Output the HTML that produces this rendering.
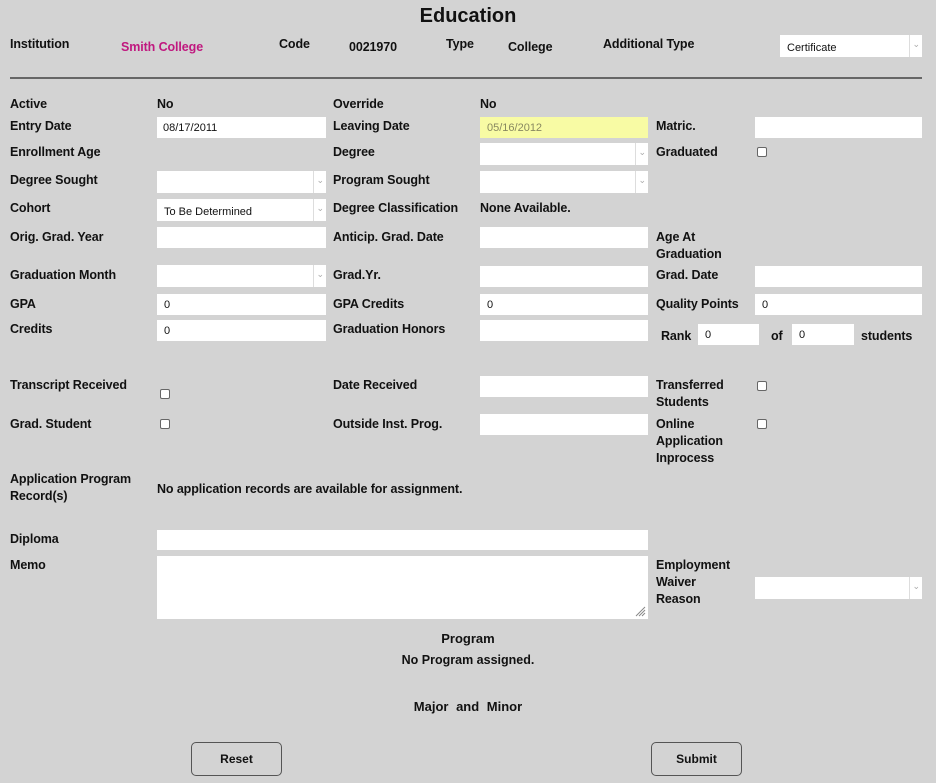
<!DOCTYPE html>
<html><head><meta charset="utf-8"><style>
*{box-sizing:border-box;margin:0;padding:0}
body{width:936px;height:783px;background:#d3d3d3;position:relative;overflow:hidden;font-family:"Liberation Sans",Arial,sans-serif;color:#111}
.l{position:absolute;font-weight:bold;font-size:12.5px;line-height:17px;white-space:nowrap;letter-spacing:-0.1px;margin-top:1px}
.i{position:absolute;background:#fff;height:21px;font-size:11px;line-height:23px;padding-left:7px}
.s{position:absolute;background:#fff;height:22px;font-size:11px;line-height:26px;padding-left:7px}
.s:after{content:"";position:absolute;right:0;top:0;width:12px;height:22px;border-left:1px solid #ddd;background:#fff}
.s:before{content:"⌄";position:absolute;right:2px;top:-4px;font-size:9px;color:#aaa;z-index:2}
.c{position:absolute;width:10px;height:10px;border:1px solid #666;border-radius:2px;background:#fff}
.b{position:absolute;width:91px;height:34px;border:1px solid #555;border-radius:5px;font-weight:bold;font-size:12px;text-align:center;line-height:32px;background:#d3d3d3}
.ctr{position:absolute;left:0;width:936px;text-align:center;font-weight:bold;font-size:13px}
</style></head><body>
<div class="ctr" style="top:5px;font-size:20px">Education</div>
<div class="l" style="left:10px;top:35px">Institution</div>
<div class="l" style="left:121px;top:38px;color:#c0187f">Smith College</div>
<div class="l" style="left:279px;top:35px">Code</div>
<div class="l" style="left:349px;top:38px">0021970</div>
<div class="l" style="left:446px;top:35px">Type</div>
<div class="l" style="left:508px;top:38px">College</div>
<div class="l" style="left:603px;top:35px">Additional Type</div>
<div class="s" style="left:780px;top:35px;width:142px">Certificate</div>
<div style="position:absolute;left:10px;top:77px;width:912px;height:2px;background:#666"></div>

<div class="l" style="left:10px;top:95px">Active</div>
<div class="l" style="left:157px;top:95px">No</div>
<div class="l" style="left:333px;top:95px">Override</div>
<div class="l" style="left:480px;top:95px">No</div>

<div class="l" style="left:10px;top:117px">Entry Date</div>
<div class="i" style="left:157px;top:117px;width:169px;padding-left:6px">08/17/2011</div>
<div class="l" style="left:333px;top:117px">Leaving Date</div>
<div class="i" style="left:480px;top:117px;width:168px;background:#f8fba4;color:#888860">05/16/2012</div>
<div class="l" style="left:656px;top:117px">Matric.</div>
<div class="i" style="left:755px;top:117px;width:167px"></div>

<div class="l" style="left:10px;top:143px">Enrollment Age</div>
<div class="l" style="left:333px;top:143px">Degree</div>
<div class="s" style="left:480px;top:143px;width:168px"></div>
<div class="l" style="left:656px;top:143px">Graduated</div>
<div class="c" style="left:757px;top:147px"></div>

<div class="l" style="left:10px;top:171px">Degree Sought</div>
<div class="s" style="left:157px;top:171px;width:169px"></div>
<div class="l" style="left:333px;top:171px">Program Sought</div>
<div class="s" style="left:480px;top:171px;width:168px"></div>

<div class="l" style="left:10px;top:199px">Cohort</div>
<div class="s" style="left:157px;top:199px;width:169px">To Be Determined</div>
<div class="l" style="left:333px;top:199px">Degree Classification</div>
<div class="l" style="left:480px;top:199px">None Available.</div>

<div class="l" style="left:10px;top:228px">Orig. Grad. Year</div>
<div class="i" style="left:157px;top:227px;width:169px"></div>
<div class="l" style="left:333px;top:228px">Anticip. Grad. Date</div>
<div class="i" style="left:480px;top:227px;width:168px"></div>
<div class="l" style="left:656px;top:228px">Age At<br>Graduation</div>

<div class="l" style="left:10px;top:266px">Graduation Month</div>
<div class="s" style="left:157px;top:265px;width:169px"></div>
<div class="l" style="left:333px;top:266px">Grad.Yr.</div>
<div class="i" style="left:480px;top:266px;width:168px"></div>
<div class="l" style="left:656px;top:266px">Grad. Date</div>
<div class="i" style="left:755px;top:266px;width:167px"></div>

<div class="l" style="left:10px;top:295px">GPA</div>
<div class="i" style="left:157px;top:294px;width:169px">0</div>
<div class="l" style="left:333px;top:295px">GPA Credits</div>
<div class="i" style="left:480px;top:294px;width:168px">0</div>
<div class="l" style="left:656px;top:295px">Quality Points</div>
<div class="i" style="left:755px;top:294px;width:167px">0</div>

<div class="l" style="left:10px;top:320px">Credits</div>
<div class="i" style="left:157px;top:320px;width:169px">0</div>
<div class="l" style="left:333px;top:320px">Graduation Honors</div>
<div class="i" style="left:480px;top:320px;width:168px"></div>
<div class="l" style="left:661px;top:327px">Rank</div>
<div class="i" style="left:698px;top:324px;width:61px">0</div>
<div class="l" style="left:771px;top:327px">of</div>
<div class="i" style="left:792px;top:324px;width:62px">0</div>
<div class="l" style="left:861px;top:327px">students</div>

<div class="l" style="left:10px;top:376px">Transcript Received</div>
<div class="c" style="left:160px;top:389px"></div>
<div class="l" style="left:333px;top:376px">Date Received</div>
<div class="i" style="left:480px;top:376px;width:168px"></div>
<div class="l" style="left:656px;top:376px">Transferred<br>Students</div>
<div class="c" style="left:757px;top:381px"></div>

<div class="l" style="left:10px;top:415px">Grad. Student</div>
<div class="c" style="left:160px;top:419px"></div>
<div class="l" style="left:333px;top:415px">Outside Inst. Prog.</div>
<div class="i" style="left:480px;top:414px;width:168px"></div>
<div class="l" style="left:656px;top:415px">Online<br>Application<br>Inprocess</div>
<div class="c" style="left:757px;top:419px"></div>

<div class="l" style="left:10px;top:470px">Application Program<br>Record(s)</div>
<div class="l" style="left:157px;top:480px">No application records are available for assignment.</div>

<div class="l" style="left:10px;top:530px">Diploma</div>
<div class="i" style="left:157px;top:530px;width:491px;height:20px"></div>
<div class="l" style="left:10px;top:556px">Memo</div>
<div class="i" style="left:157px;top:556px;width:491px;height:63px"></div>
<svg style="position:absolute;left:634px;top:605px" width="12" height="12"><path d="M11 2L2 11M11 5L5 11M11 8L8 11" stroke="#888" stroke-width="1"/></svg>
<div class="l" style="left:656px;top:556px">Employment<br>Waiver<br>Reason</div>
<div class="s" style="left:755px;top:577px;width:167px"></div>

<div class="ctr" style="top:631px">Program</div>
<div class="ctr" style="top:653px;font-size:12.5px">No Program assigned.</div>
<div class="ctr" style="top:699px;word-spacing:4px">Major and Minor</div>
<div class="b" style="left:191px;top:742px">Reset</div>
<div class="b" style="left:651px;top:742px">Submit</div>
</body></html>
